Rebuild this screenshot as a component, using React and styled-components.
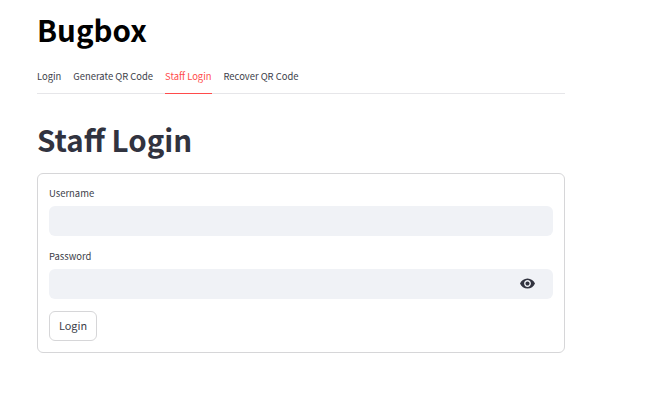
import React from "react";
import styled, { createGlobalStyle } from "styled-components";

const Global = createGlobalStyle`
  * { box-sizing: border-box; }
  body {
    margin: 0;
    background: #fff;
    color: #31333f;
    font-family: "Noto Sans CJK SC", "Noto Sans", sans-serif;
  }
`;

const Page = styled.main`
  width: 646px;
  height: 420px;
  padding: 9px 81px 0 37px;
  overflow: hidden;
`;

const Title = styled.h1`
  margin: 0;
  height: 40px;
  line-height: 40px;
  font-size: 29.5px;
  font-weight: 700;
  color: ${(p) => p.$color};
  white-space: nowrap;
`;

const Tabs = styled.nav`
  display: flex;
  gap: 12px;
  height: 30px;
  margin: 15px 0 25px;
  border-bottom: 1px solid #e6e6e9;
`;

const Tab = styled.button`
  height: 30px;
  padding: 0 0 4px;
  border: 0;
  border-bottom: 1px solid ${(p) => (p.$active ? "#ff4b4b" : "transparent")};
  background: none;
  color: ${(p) => (p.$active ? "#ff4b4b" : "#3c3e49")};
  font: 400 9.42px/25px "Noto Sans CJK SC", "Noto Sans", sans-serif;
  white-space: nowrap;
`;

const Form = styled.form`
  display: flex;
  flex-direction: column;
  height: 180px;
  margin-top: 14px;
  padding: 11px;
  border: 1px solid #d6d6d8;
  border-radius: 6px;
`;

const Field = styled.label`
  display: block;
  height: 51px;
  margin-bottom: 12px;
`;

const Label = styled.span`
  display: block;
  height: 21px;
  line-height: 17px;
  font-size: 9.45px;
  color: #3c3e49;
`;

const InputBox = styled.span`
  display: flex;
  align-items: center;
  height: 30px;
  padding-right: 18px;
  border-radius: 6px;
  background: #f0f2f6;
`;

const Input = styled.input`
  flex: 1;
  min-width: 0;
  height: 100%;
  padding: 0 12px;
  border: 0;
  outline: 0;
  background: transparent;
`;

const EyeIcon = styled.svg`
  width: 15px;
  height: 15px;
  margin-bottom: 1px;
  fill: #31333f;
`;

const Submit = styled.button`
  width: 48px;
  height: 30px;
  flex: none;
  padding: 0;
  border: 1px solid #d6d6d8;
  border-radius: 6px;
  background: #fff;
  color: #3c3e49;
  font: 400 10.9px/27px "Noto Sans CJK SC", "Noto Sans", sans-serif;
  padding-bottom: 1px;
`;

const tabs = ["Login", "Generate QR Code", "Staff Login", "Recover QR Code"];

export default function App() {
  return (
    <>
      <Global />
      <Page>
        <Title $color="#000">Bugbox</Title>
        <Tabs>
          {tabs.map((name) => (
            <Tab key={name} type="button" $active={name === "Staff Login"}>
              {name}
            </Tab>
          ))}
        </Tabs>
        <Title as="h2" $color="#31333f">Staff Login</Title>
        <Form>
          <Field>
            <Label>Username</Label>
            <InputBox>
              <Input type="text" />
            </InputBox>
          </Field>
          <Field>
            <Label>Password</Label>
            <InputBox>
              <Input type="password" />
              <EyeIcon viewBox="1 1 22 22">
                <path d="M12 4.5C7 4.5 2.73 7.61 1 12c1.73 4.39 6 7.5 11 7.5s9.27-3.11 11-7.5c-1.73-4.39-6-7.5-11-7.5zM12 17c-2.76 0-5-2.24-5-5s2.24-5 5-5 5 2.24 5 5-2.24 5-5 5zm0-8c-1.66 0-3 1.34-3 3s1.34 3 3 3 3-1.34 3-3-1.34-3-3-3z" />
              </EyeIcon>
            </InputBox>
          </Field>
          <Submit type="button">Login</Submit>
        </Form>
      </Page>
    </>
  );
}
